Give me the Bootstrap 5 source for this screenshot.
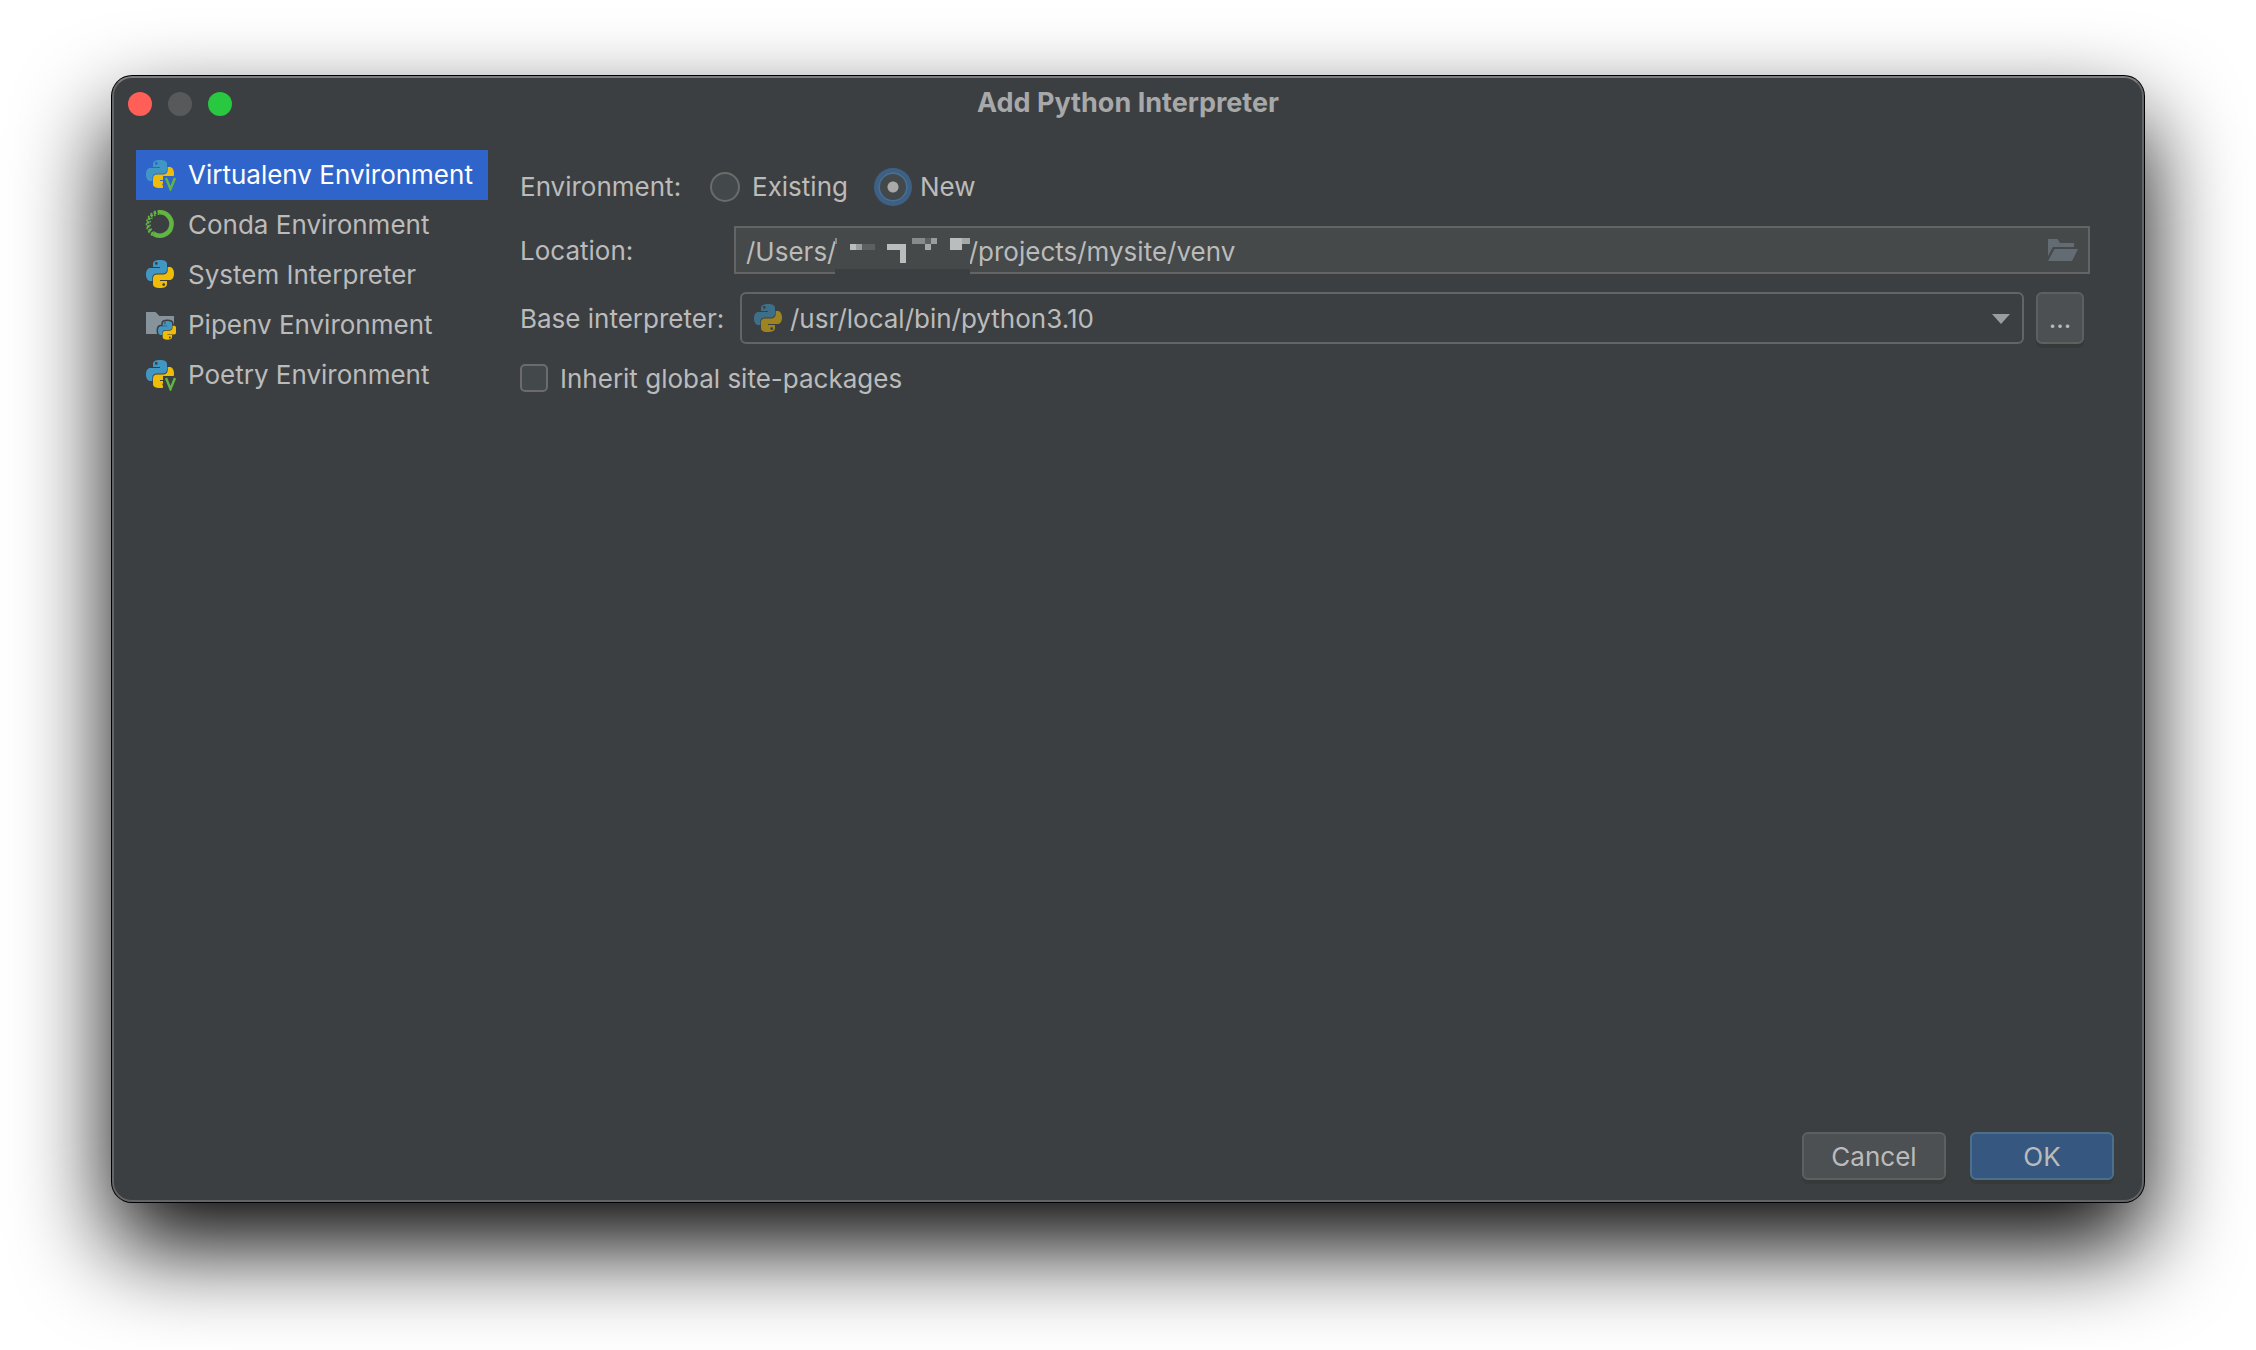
<!DOCTYPE html>
<html lang="en">
<head>
<meta charset="utf-8">
<meta name="viewport" content="width=device-width, initial-scale=1">
<title>Add Python Interpreter</title>
<link href="https://cdn.jsdelivr.net/npm/bootstrap@5.3.0/dist/css/bootstrap.min.css" rel="stylesheet">
<style>
  body { background: #fff; color: #bbb; font-family: Inter, "Liberation Sans", sans-serif; font-size: 26px; line-height: 32px; padding: 76px 112px 148px; }
  .dialog-window { background: #3c3f41; border: 2px solid #626567; border-top-color: #7b7d7f; border-radius: 20px; box-shadow: 0 0 0 1px #000, 0 44px 94px rgba(0,0,0,.98); }
  .title-bar { height: 52px; padding: 0 14px; }
  .title-bar h1 { font-size: 27px; line-height: 32px; font-weight: 700; color: #a7a8a9; padding-bottom: 2px; }
  .title-side { flex: 1 1 0; gap: 16px; }
  .light { width: 24px; height: 24px; border: 0; padding: 0; border-radius: 50%; }
  .light-close { background: #ff5f57; }
  .light-min { background: #57595b; }
  .light-zoom { background: #28c840; }
  .dialog-main { padding: 20px 52px 0 22px; gap: 32px; }
  .env-list { width: 352px; }
  .env-list .list-group-item { height: 50px; padding: 0 8px; gap: 12px; background: transparent; color: #bbb; border: 0; border-radius: 0; white-space: nowrap; }
  .env-list .list-group-item.active { background: #2f65ca; color: #fff; }
  .env-icon { width: 32px; height: 32px; flex: none; }
  .env-form { padding-top: 14px; min-width: 0; }
  .field-label { width: 214px; flex: none; padding-top: 2px; }
  .env-row { height: 46px; margin-bottom: 16px; }
  .env-row .group-label { width: 186px; }
  .choice { gap: 8px; }
  .choice input { appearance: none; margin: 0 4px; width: 30px; height: 30px; border: 2px solid #6b6b6b; border-radius: 50%; background: #43494a; }
  .choice input:checked { border-color: #466d94; background: radial-gradient(circle, #a9a9a9 0 5px, #43494a 6px); box-shadow: 0 0 0 4px #3d6185; }
  .choice-gap { margin-right: 26px; }
  .location-row { margin-bottom: 18px; }
  .path-input { height: 48px; background: #45494a; color: #bbb; border: 2px solid #646464; border-radius: 0; padding: 2px 64px 0 10px; font-size: 26px; line-height: 32px; width: 100%; outline: 0; }
  .path-mask { position: absolute; left: 99px; top: 4px; width: 137px; height: 44px; pointer-events: none; }
  .browse { position: absolute; right: 10px; top: 8px; width: 34px; height: 32px; padding: 0; border: 0; background: none; display: flex; align-items: center; justify-content: center; }
  .base-row { padding-right: 6px; margin-bottom: 16px; gap: 12px; }
  .base-row .field-label { width: 208px; }
  .base-select { appearance: none; width: 100%; height: 52px; background: #3c3f41; color: #bbb; border: 2px solid #646464; border-radius: 6px; padding: 2px 48px 0 48px; font-size: 26px; line-height: 32px; outline: 0; }
  .select-icon { position: absolute; left: 12px; top: 11px; width: 32px; height: 32px; opacity: .55; pointer-events: none; }
  .select-arrow { position: absolute; right: 14px; top: 22px; width: 18px; height: 10px; pointer-events: none; }
  .dialog-btn { background: #4c5052; color: #bbb; border: 2px solid #5e6060; border-radius: 6px; box-shadow: 0 4px 0 #373a3b; font-size: 26px; line-height: 32px; padding: 2px 0 0; width: 144px; height: 48px; }
  .dialog-btn:hover { background: #55595b; color: #ccc; border-color: #5e6060; }
  .dialog-btn.ok { background: #365880; border-color: #4c708c; }
  .more-btn { width: 48px; height: 52px; flex: none; }
  .inherit-row { height: 36px; gap: 12px; }
  .inherit-row label { padding-top: 2px; }
  .inherit-row input { appearance: none; margin: 0; width: 28px; height: 28px; border: 2px solid #6b6b6b; border-radius: 5px; background: #43494a; }
  .dialog-actions { padding: 0 28px 20px; gap: 24px; }
</style>
</head>
<body class="min-vh-100 d-flex">
<svg width="0" height="0" class="position-absolute" aria-hidden="true">
  <defs>
    <g id="snake-blue">
      <path fill="#4197c4" fill-rule="evenodd" d="M14 0C9.500 0 7 1.300 7 4V7H14V8H4.500C1.600 8 0 10.500 0 14.500S1.800 21 4.500 21H6.300V17.800C6.300 15.200 8.300 13.500 10.800 13.500H17.200C19.300 13.500 21 12 21 9.800V4C21 1.300 18.500 0 14 0ZM10.300 2A1.400 1.400 0 1 1 10.300 4.800A1.400 1.400 0 0 1 10.300 2Z"/>
    </g>
    <g id="snake-yellow">
      <path fill="#efbc07" fill-rule="evenodd" transform="rotate(180 14 14)" d="M14 0C9.500 0 7 1.300 7 4V7H14V8H4.500C1.600 8 0 10.500 0 14.500S1.800 21 4.500 21H6.300V17.800C6.300 15.200 8.300 13.500 10.800 13.500H17.200C19.300 13.500 21 12 21 9.800V4C21 1.300 18.500 0 14 0ZM10.300 2A1.400 1.400 0 1 1 10.300 4.800A1.400 1.400 0 0 1 10.300 2Z"/>
    </g>
    <clipPath id="v-cut"><path d="M0 0H28V16H17V28H0Z"/></clipPath>
    <symbol id="python" viewBox="0 0 32 32"><g transform="translate(2 1)"><use href="#snake-blue"/><use href="#snake-yellow"/></g></symbol>
    <symbol id="python-v" viewBox="0 0 32 32">
      <g transform="translate(2 1)"><use href="#snake-blue"/><g clip-path="url(#v-cut)"><use href="#snake-yellow"/></g></g>
      <path d="M22 19L26.500 30L31 19" fill="none" stroke="#62b543" stroke-width="2.400"/>
    </symbol>
    <symbol id="conda" viewBox="0 0 32 32">
      <path d="M15 3.300A11.700 11.700 0 1 1 9.500 24.800" fill="none" stroke="#62b543" stroke-width="4.600"/>
      <path d="M9.500 25A11.800 11.800 0 0 1 15.500 3.200" fill="none" stroke="#62b543" stroke-width="2.600" stroke-dasharray="2.600 1.400"/>
      <path d="M8.500 26.300A13.400 13.400 0 0 1 15.500 1.700" fill="none" stroke="#62b543" stroke-width="1.600" stroke-dasharray="2 2"/>
      <path d="M10.500 23.500A10 10 0 0 1 15 5.200" fill="none" stroke="#62b543" stroke-width="1.400" stroke-dasharray="1.600 2.200"/>
    </symbol>
    <symbol id="pipenv" viewBox="0 0 32 32">
      <path fill="#87939a" d="M2 3H11.500L15.500 7H30V25H2Z"/>
      <g transform="translate(14 12) scale(.67)" stroke="#3c3f41" stroke-width="4.500"><use href="#snake-blue"/><use href="#snake-yellow"/></g>
      <g transform="translate(14 12) scale(.67)"><use href="#snake-blue"/><use href="#snake-yellow"/></g>
    </symbol>
  </defs>
</svg>

<main class="dialog-window d-flex flex-column flex-grow-1">
  <header class="title-bar d-flex align-items-center">
    <div class="title-side d-flex">
      <button type="button" class="light light-close" aria-label="Close"></button>
      <button type="button" class="light light-min" aria-label="Minimize" disabled></button>
      <button type="button" class="light light-zoom" aria-label="Zoom"></button>
    </div>
    <h1 class="m-0">Add Python Interpreter</h1>
    <div class="title-side"></div>
  </header>

  <div class="dialog-main d-flex flex-grow-1 align-items-start">
    <nav class="env-list list-group flex-shrink-0" aria-label="Interpreter type">
      <a href="#" class="list-group-item d-flex align-items-center active" aria-current="true"><svg class="env-icon" aria-hidden="true"><use href="#python-v"/></svg>Virtualenv Environment</a>
      <a href="#" class="list-group-item d-flex align-items-center"><svg class="env-icon" aria-hidden="true"><use href="#conda"/></svg>Conda Environment</a>
      <a href="#" class="list-group-item d-flex align-items-center"><svg class="env-icon" aria-hidden="true"><use href="#python"/></svg>System Interpreter</a>
      <a href="#" class="list-group-item d-flex align-items-center"><svg class="env-icon" aria-hidden="true"><use href="#pipenv"/></svg>Pipenv Environment</a>
      <a href="#" class="list-group-item d-flex align-items-center"><svg class="env-icon" aria-hidden="true"><use href="#python-v"/></svg>Poetry Environment</a>
    </nav>

    <form class="env-form flex-grow-1">
      <div class="env-row d-flex align-items-center" role="radiogroup" aria-labelledby="env-label">
        <span id="env-label" class="group-label">Environment:</span>
        <div class="choice choice-gap d-flex align-items-center">
          <input type="radio" name="env" id="env-existing"><label for="env-existing">Existing</label>
        </div>
        <div class="choice d-flex align-items-center">
          <input type="radio" name="env" id="env-new" checked><label for="env-new">New</label>
        </div>
      </div>

      <div class="location-row d-flex align-items-center">
        <label class="field-label" for="location">Location:</label>
        <div class="position-relative flex-grow-1">
          <input class="path-input d-block" type="text" id="location" value="/Users/l&emsp;&emsp;&emsp;&emsp;&nbsp;&nbsp;&nbsp;/projects/mysite/venv">
          <svg class="path-mask" viewBox="0 0 137 44" shape-rendering="crispEdges" aria-hidden="true">
            <path fill="#45494a" d="M2 0H137V39H2Z"/>
            <path fill="#3c3f41" d="M2 39H137V44H2Z"/>
            <path fill="#888a8b" d="M2 8H4V14H2ZM79 8H92V14H79Z"/>
            <path fill="#bbbcbc" d="M17 14H23V20H17ZM54 14H73V33H67V20H54ZM117 8H129V20H117Z"/>
            <path fill="#9b9d9d" d="M23 14H29V20H23ZM98 8H104V14H98Z"/>
            <path fill="#5c6061" d="M29 14H42V20H29ZM92 8H98V14H92Z"/>
            <path fill="#a6a8a8" d="M92 14H98V20H92ZM129 8H137V14H129Z"/>
          </svg>
          <button type="button" class="browse" aria-label="Browse">
            <svg width="30" height="22" viewBox="0 0 30 22" aria-hidden="true"><path fill="#636c73" d="M0 0H9.500L12 4H26V8H5L0 17ZM6.500 10H30L24 22H0Z"/></svg>
          </button>
        </div>
      </div>

      <div class="base-row d-flex align-items-center">
        <label class="field-label" for="base">Base interpreter:</label>
        <div class="position-relative flex-grow-1">
          <select class="base-select d-block" id="base"><option>/usr/local/bin/python3.10</option></select>
          <svg class="select-icon" aria-hidden="true"><use href="#python"/></svg>
          <svg class="select-arrow" viewBox="0 0 18 10" aria-hidden="true"><path fill="#9a9da0" d="M0 0H18L9 10Z"/></svg>
        </div>
        <button type="button" class="btn dialog-btn more-btn" aria-label="Choose base interpreter">...</button>
      </div>

      <div class="inherit-row d-flex align-items-center">
        <input type="checkbox" id="inherit"><label for="inherit">Inherit global site-packages</label>
      </div>
    </form>
  </div>

  <footer class="dialog-actions d-flex justify-content-end">
    <button type="button" class="btn dialog-btn">Cancel</button>
    <button type="submit" class="btn dialog-btn ok">OK</button>
  </footer>
</main>
<script src="https://cdn.jsdelivr.net/npm/bootstrap@5.3.0/dist/js/bootstrap.bundle.min.js"></script>
</body>
</html>
